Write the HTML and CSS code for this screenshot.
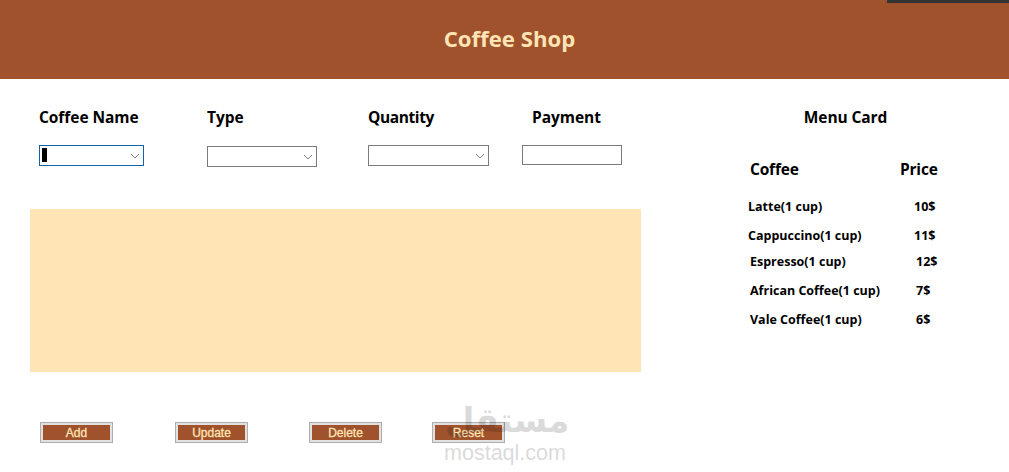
FILE: index.html
```html
<!DOCTYPE html>
<html lang="en">
<head>
<meta charset="utf-8">
<title>Coffee Shop</title>
<link rel="stylesheet" href="styles.css">
</head>
<body>
<div class="strip"></div>
<header class="header"><h1>Coffee Shop</h1></header>
<main class="main">
  <section class="left">
    <div class="fields">
      <div class="field f1">
        <label>Coffee Name</label>
        <div class="box select focus"><span class="caret"></span><svg class="chev" width="10" height="6" viewBox="0 0 10 6"><path d="M1 1l4 4 4-4" fill="none" stroke="#808080" stroke-width="1"/></svg></div>
      </div>
      <div class="field f2">
        <label>Type</label>
        <div class="box select low"><svg class="chev" width="10" height="6" viewBox="0 0 10 6"><path d="M1 1l4 4 4-4" fill="none" stroke="#808080" stroke-width="1"/></svg></div>
      </div>
      <div class="field f3">
        <label>Quantity</label>
        <div class="box select"><svg class="chev" width="10" height="6" viewBox="0 0 10 6"><path d="M1 1l4 4 4-4" fill="none" stroke="#808080" stroke-width="1"/></svg></div>
      </div>
      <div class="field f4">
        <label class="pay">Payment</label>
        <div class="box text"></div>
      </div>
    </div>
    <div class="panel"></div>
    <div class="buttons">
      <button class="btn">Add</button>
      <button class="btn">Update</button>
      <button class="btn">Delete</button>
      <button class="btn">Reset</button>
    </div>
  </section>
  <aside class="menu">
    <h2>Menu Card</h2>
    <div class="menu-head"><span>Coffee</span><span class="price-h">Price</span></div>
    <div class="row r1"><span class="name">Latte(1 cup)</span><span class="p">10$</span></div>
    <div class="row r2"><span class="name">Cappuccino(1 cup)</span><span class="p">11$</span></div>
    <div class="row r3"><span class="name">Espresso(1 cup)</span><span class="p">12$</span></div>
    <div class="row r4"><span class="name">African Coffee(1 cup)</span><span class="p">7$</span></div>
    <div class="row r5"><span class="name">Vale Coffee(1 cup)</span><span class="p">6$</span></div>
  </aside>
</main>
<div class="mark"><div class="ar">مستقل</div><div class="en">mostaql.com</div></div>
</body>
</html>
```
FILE: styles.css
```css
* { box-sizing: border-box; }
html, body { margin: 0; padding: 0; }
body {
  width: 1009px;
  height: 472px;
  overflow: hidden;
  background: #fff;
  color: #000;
  font-family: "Open Sans", "Noto Sans", sans-serif;
  position: relative;
}
.strip {
  position: absolute;
  top: 0; right: 0;
  width: 122px;
  height: 3px;
  background: #333;
}
.header {
  height: 79px;
  background: #a0522d;
  display: flex;
  align-items: center;
  justify-content: center;
  padding: 0 0 2px 10px;
}
.header h1 {
  margin: 0;
  font-size: 22.2px;
  font-weight: 700;
  color: #ffe4b5;
}
.main { display: flex; }
.left { width: 748px; padding-left: 30px; }
.fields {
  display: flex;
  height: 130px;
  padding: 28px 0 0 9px;
}
.field { display: flex; flex-direction: column; }
.field label {
  font-size: 15.5px;
  font-weight: 700;
  line-height: 20px;
  letter-spacing: -0.05px;
  white-space: nowrap;
}
.f1 { width: 168px; }
.f2 { width: 161px; }
.f3 { width: 154px; }
.f3 label { letter-spacing: -0.4px; }
.box {
  margin-top: 18px;
  height: 21px;
  border: 1px solid #7a7a7a;
  background: #fff;
  display: flex;
  align-items: center;
}
.focus { border-color: #0f62ac; width: 105px; }
.low { margin-top: 19px; width: 110px; }
.f3 .box { width: 121px; }
.text { width: 100px; height: 20px; }
.pay { padding-left: 10px; }
.select { justify-content: flex-end; position: relative; padding-right: 3px; }
.chev { display: block; }
.caret {
  position: absolute;
  left: 2px; top: 2px;
  width: 5px; height: 14px;
  background: #000;
}
.panel {
  width: 611px;
  height: 163px;
  background: #ffe4b5;
}
.buttons {
  display: flex;
  padding: 50px 0 0 11px;
  margin-left: -1px;
}
.btn {
  width: 73px;
  height: 21px;
  margin: 0 62px 0 0;
  padding: 0;
  border: 1px solid #adadad;
  outline: 2px solid #e1e1e1;
  outline-offset: -3px;
  background: #a0522d;
  color: #ffe4b5;
  font: 12px/1 "Liberation Sans", Arial, sans-serif;
  -webkit-text-stroke: 0.3px #ffe4b5;
}
.btn:nth-child(2) { margin-right: 61px; }
.btn:nth-child(3) { margin-right: 50px; }
.menu { padding-top: 28px; width: 261px; }
.menu h2 {
  margin: 0;
  width: 195px;
  text-align: center;
  font-size: 15.5px;
  line-height: 20px;
  font-weight: 700;
  letter-spacing: -0.1px;
}
.menu-head {
  display: flex;
  margin-top: 32px;
  padding-left: 2px;
  font-size: 15.5px;
  line-height: 20px;
  font-weight: 700;
  letter-spacing: -0.2px;
}
.menu-head span:first-child { width: 150px; }
.row {
  display: flex;
  font-size: 12.5px;
  line-height: 17px;
  font-weight: 700;
  white-space: nowrap;
}
.r1 { margin-top: 19px; }
.r2 { margin-top: 12px; }
.r3 { margin-top: 9px; padding-left: 2px; }
.r4 { margin-top: 12px; padding-left: 2px; }
.r5 { margin-top: 12px; padding-left: 2px; }
.name { width: 166px; }
.mark {
  position: absolute;
  left: 443px;
  top: 400px;
  width: 124px;
  text-align: center;
  color: #000;
  opacity: 0.14;
  pointer-events: none;
  font-family: "DejaVu Sans", sans-serif;
}
.mark .ar { font-size: 34px; font-weight: 700; line-height: 41px; white-space: nowrap; margin-left: 2px; }
.mark .en { font-size: 21.5px; line-height: 24px; font-family: "Liberation Sans", sans-serif; white-space: nowrap; }
```
